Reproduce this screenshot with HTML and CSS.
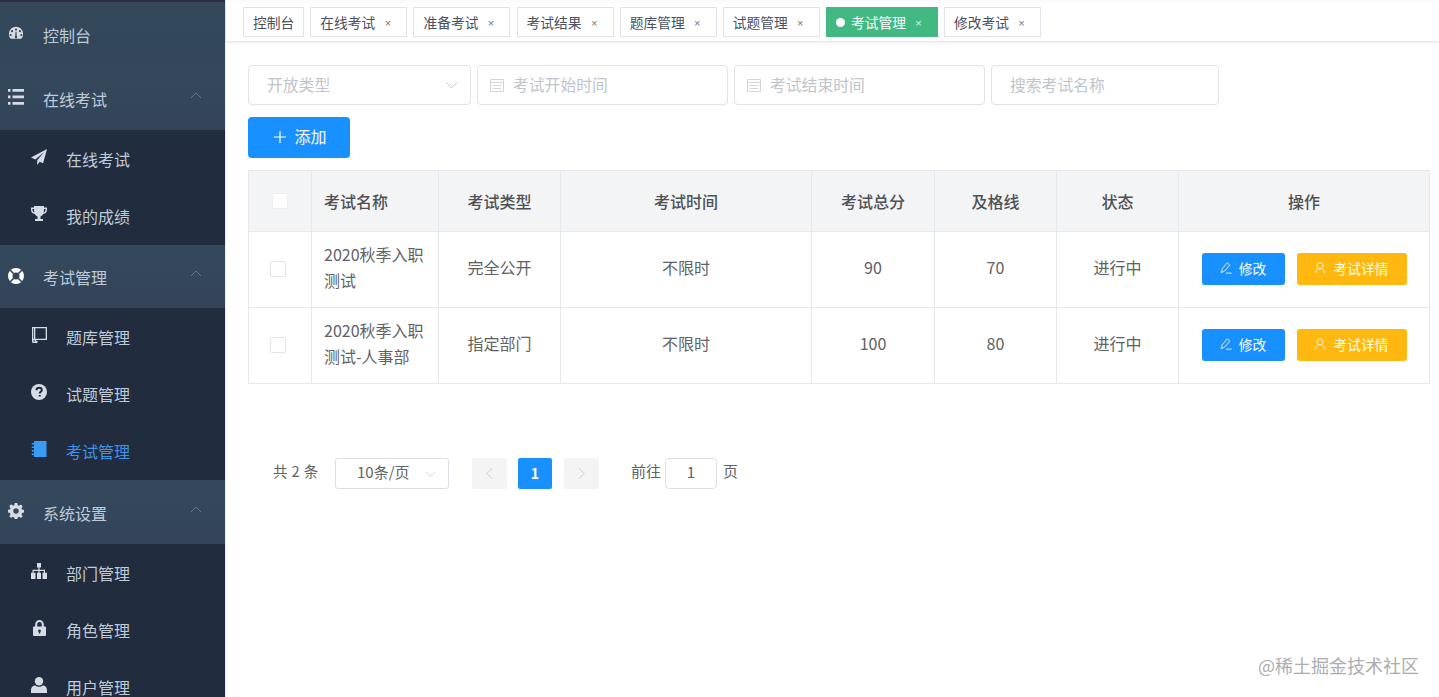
FILE: index.html
```html
<!DOCTYPE html>
<html lang="zh-CN">
<head>
<meta charset="utf-8">
<title>考试管理</title>
<link rel="stylesheet" href="styles.css">
</head>
<body>
<div class="app">
  <aside class="sidebar">
    <div class="topline"></div>
    <div class="head first">
      <svg class="ico" viewBox="0 0 18 16"><path fill-rule="evenodd" d="M9 1a8 8 0 0 0-8 8c0 2 .6 3.600 1.600 5 .2.300.5.500.9.500h11c.4 0 .7-.2.9-.5 1-1.400 1.600-3 1.600-5a8 8 0 0 0-8-8zM9 3a1.200 1.200 0 1 1 0 2.400A1.200 1.200 0 0 1 9 3zM4.600 4.700a1.200 1.200 0 1 1 0 2.400 1.200 1.200 0 0 1 0-2.400zm8.800 0a1.200 1.200 0 1 1 0 2.400 1.200 1.200 0 0 1 0-2.400zM3 9a1.200 1.200 0 1 1 0 2.400A1.200 1.200 0 0 1 3 9zm12 0a1.200 1.200 0 1 1 0 2.400A1.200 1.200 0 0 1 15 9zM8.400 6.500h1.200l.2 4.800a1.400 1.400 0 1 1-1.600 0z"/></svg>
      <span>控制台</span>
    </div>
    <div class="head">
      <svg class="ico" viewBox="0 0 16 16"><path d="M0 0h2.500v2.800H0zM4.500 0H16v2.800H4.500zM0 6.500h2.500v2.800H0zM4.500 6.500H16v2.800H4.500zM0 13h2.500v2.800H0zM4.500 13H16v2.800H4.500z"/></svg>
      <span>在线考试</span>
      <svg class="chev" viewBox="0 0 12 7"><path d="M1 6l5-5 5 5"/></svg>
    </div>
    <div class="sub">
      <svg class="ico" viewBox="0 0 16 16"><path d="M16 0 0 8.600l4.300 1.800L13 3.200 6.200 11.200V16l2.500-3.300 3.400 1.500z"/></svg>
      <span>在线考试</span>
    </div>
    <div class="sub tall">
      <svg class="ico" viewBox="0 0 16 16"><path d="M3 0h10v1.500h3v2.300c0 2.400-1.700 4-3.700 4.300-.7 1.300-1.600 2-2.800 2.400v2.500h2.500V15h-8v-2h2.500v-2.500C5.300 10.100 4.400 9.400 3.700 8.100 1.700 7.800 0 6.200 0 3.800V1.500h3zM1.500 3v.8c0 1.300.8 2.300 1.900 2.700A14 14 0 0 1 3 3zm13 0H13a14 14 0 0 1-.4 3.500c1.100-.4 1.900-1.400 1.900-2.700z"/></svg>
      <span>我的成绩</span>
    </div>
    <div class="head short">
      <svg class="ico" viewBox="0 0 16 16"><path fill="#fff" fill-rule="evenodd" d="M8 0a8 8 0 1 0 0 16A8 8 0 0 0 8 0zm0 4.500a3.500 3.500 0 1 1 0 7 3.500 3.500 0 0 1 0-7z"/><path class="notch" d="M2.300 2.300l3.300 3.300M13.700 2.300l-3.300 3.300M2.300 13.700l3.300-3.300M13.700 13.700l-3.300-3.300"/></svg>
      <span>考试管理</span>
      <svg class="chev" viewBox="0 0 12 7"><path d="M1 6l5-5 5 5"/></svg>
    </div>
    <div class="sub">
      <svg class="ico" viewBox="0 0 16 16"><path fill-rule="evenodd" d="M1 0h15v13H5v.8h1.500V16H2.500A1.500 1.500 0 0 1 1 14.500zm1.300 1.300v10.400h.7V1.300zm2 0v10.400h10.400V1.300zM2.500 13.300v1.400h1.200v-1.400z"/></svg>
      <span>题库管理</span>
    </div>
    <div class="sub">
      <svg class="ico" viewBox="0 0 16 16"><circle cx="8" cy="8" r="8"/><path class="cut" d="M5.400 6.200C5.500 4.600 6.700 3.700 8.200 3.700c1.500 0 2.600.9 2.600 2.200 0 1.900-2.100 1.900-2.100 3.600M8.700 11v1.500"/></svg>
      <span>试题管理</span>
    </div>
    <div class="sub active tall">
      <svg class="ico" viewBox="0 0 16 16"><path d="M3 0h12.500v16H3zM.8 2H3v1.500H.8zM.8 5.500H3V7H.8zM.8 9H3v1.500H.8zM.8 12.500H3V14H.8z"/></svg>
      <span>考试管理</span>
    </div>
    <div class="head">
      <svg class="ico" viewBox="0 0 16 16"><path fill-rule="evenodd" d="M6.700 0h2.600l.4 2.200 1.300.6 1.900-1.300 1.800 1.900-1.200 1.800.5 1.400 2 .4v2.600l-2 .4-.5 1.400 1.200 1.800-1.800 1.900-1.900-1.300-1.300.6-.4 2.100H6.700l-.4-2.100-1.300-.6-1.900 1.300-1.800-1.900 1.200-1.800-.5-1.400-2-.4V6.800l2-.4.5-1.400-1.200-1.800 1.800-1.900L5 2.800l1.300-.6zM8 5.300a2.700 2.700 0 1 0 0 5.400 2.700 2.700 0 0 0 0-5.400z"/></svg>
      <span>系统设置</span>
      <svg class="chev" viewBox="0 0 12 7"><path d="M1 6l5-5 5 5"/></svg>
    </div>
    <div class="sub">
      <svg class="ico" viewBox="0 0 16 16"><path d="M6 0h4v4.500H8.600v2.300h5.400v3h2V16h-4.500V9.800h1.300V8H8.600v1.800H10V16H6V9.800h1.400V8H2.700v1.800h1.800V16H0V9.800h1.500v-3h5.900V4.500H6z"/></svg>
      <span>部门管理</span>
    </div>
    <div class="sub">
      <svg class="ico small" viewBox="0 0 13 16"><path fill-rule="evenodd" d="M6.500 0A4.300 4.300 0 0 0 2.200 4.300V6.500H1a1 1 0 0 0-1 1V15a1 1 0 0 0 1 1h11a1 1 0 0 0 1-1V7.500a1 1 0 0 0-1-1h-1.200V4.300A4.300 4.300 0 0 0 6.500 0zm0 2a2.300 2.300 0 0 1 2.300 2.300v2.200H4.200V4.300A2.300 2.300 0 0 1 6.500 2zm0 7.500a1.400 1.400 0 0 1 .7 2.600v1.400H5.800v-1.400a1.400 1.400 0 0 1 .7-2.600z"/></svg>
      <span>角色管理</span>
    </div>
    <div class="sub">
      <svg class="ico" viewBox="0 0 16 16"><circle cx="8" cy="4.200" r="4.200"/><path d="M0 16v-3c0-2.500 1.700-4.500 4.200-4.500 1 .8 2.400 1.300 3.800 1.300s2.800-.5 3.800-1.300c2.500 0 4.200 2 4.200 4.500v3z"/></svg>
      <span>用户管理</span>
    </div>
  </aside>

  <main class="main">
    <nav class="tags">
      <a class="tag">控制台</a>
      <a class="tag">在线考试<i>×</i></a>
      <a class="tag">准备考试<i>×</i></a>
      <a class="tag">考试结果<i>×</i></a>
      <a class="tag">题库管理<i>×</i></a>
      <a class="tag">试题管理<i>×</i></a>
      <a class="tag on"><b></b>考试管理<i>×</i></a>
      <a class="tag">修改考试<i>×</i></a>
    </nav>

    <section class="content">
      <div class="filters">
        <div class="field w-select">
          <span>开放类型</span>
          <svg class="down" viewBox="0 0 14 8"><path d="M1 1l6 6 6-6"/></svg>
        </div>
        <div class="field w-date">
          <svg class="cal" viewBox="0 0 14 14"><path d="M.5 1.500h13v12H.5zM.5 4.500h13M3 7.500h8M3 10.500h8"/></svg>
          <span>考试开始时间</span>
        </div>
        <div class="field w-date">
          <svg class="cal" viewBox="0 0 14 14"><path d="M.5 1.500h13v12H.5zM.5 4.500h13M3 7.500h8M3 10.500h8"/></svg>
          <span>考试结束时间</span>
        </div>
        <div class="field w-search"><span>搜索考试名称</span></div>
      </div>

      <button class="add"><svg viewBox="0 0 12 12"><path d="M6 0v12M0 6h12"/></svg><span>添加</span></button>

      <table class="grid">
        <colgroup>
          <col class="c1"><col class="c2"><col class="c3"><col class="c4"><col class="c5"><col class="c6"><col class="c7"><col>
        </colgroup>
        <thead>
          <tr>
            <th><span class="check white"></span></th>
            <th class="left">考试名称</th>
            <th>考试类型</th>
            <th>考试时间</th>
            <th>考试总分</th>
            <th>及格线</th>
            <th>状态</th>
            <th>操作</th>
          </tr>
        </thead>
        <tbody>
          <tr>
            <td><span class="check"></span></td>
            <td class="left">2020秋季入职测试</td>
            <td>完全公开</td>
            <td>不限时</td>
            <td>90</td>
            <td>70</td>
            <td>进行中</td>
            <td class="opcell">
              <div class="ops">
                <button class="btn blue"><svg viewBox="0 0 14 14"><path d="M1.500 12.500 2.500 8 8.500 1l3 2.500-6 7zM7 13h6.500"/></svg><span>修改</span></button>
                <button class="btn amber"><svg viewBox="0 0 14 14"><circle cx="7" cy="4.500" r="3.500"/><path d="M1.500 13c.3-3 2-4.500 3.500-5M12.500 13c-.3-3-2-4.500-3.500-5"/></svg><span>考试详情</span></button>
              </div>
            </td>
          </tr>
          <tr>
            <td><span class="check"></span></td>
            <td class="left">2020秋季入职测试-人事部</td>
            <td>指定部门</td>
            <td>不限时</td>
            <td>100</td>
            <td>80</td>
            <td>进行中</td>
            <td class="opcell">
              <div class="ops">
                <button class="btn blue"><svg viewBox="0 0 14 14"><path d="M1.500 12.500 2.500 8 8.500 1l3 2.500-6 7zM7 13h6.500"/></svg><span>修改</span></button>
                <button class="btn amber"><svg viewBox="0 0 14 14"><circle cx="7" cy="4.500" r="3.500"/><path d="M1.500 13c.3-3 2-4.500 3.500-5M12.500 13c-.3-3-2-4.500-3.500-5"/></svg><span>考试详情</span></button>
              </div>
            </td>
          </tr>
        </tbody>
      </table>

      <div class="pager">
        <span class="total">共 2 条</span>
        <div class="size"><span>10条/页</span><svg viewBox="0 0 14 8"><path d="M1 1l6 6 6-6"/></svg></div>
        <span class="pg"><svg viewBox="0 0 8 14"><path d="M7 1 1 7l6 6"/></svg></span>
        <span class="pg cur">1</span>
        <span class="pg"><svg viewBox="0 0 8 14"><path d="M1 1l6 6-6 6"/></svg></span>
        <span class="goto">前往</span>
        <span class="jump">1</span>
        <span class="unit">页</span>
      </div>
    </section>
  </main>
</div>
<div class="mark">@稀土掘金技术社区</div>
</body>
</html>
```
FILE: styles.css
```css
* { box-sizing: border-box; }
html, body { margin: 0; height: 100%; overflow: hidden; }
body {
  font-family: "Noto Sans CJK SC", "Liberation Sans", sans-serif;
  color: #606266;
  background: #fff;
}
.app { display: flex; height: 697px; }

/* sidebar */
.sidebar {
  flex: 0 0 226px;
  height: 697px;
  overflow: hidden;
  background: #212c3e;
  border-right: 1px solid #e4edf4;
  color: #bfcbd9;
}
.topline { height: 2px; background: #2d2c40; }
.head {
  height: 64px;
  display: flex;
  align-items: center;
  padding: 1px 0 0 8px;
  font-size: 16px;
  color: #bfcbd9;
  background: linear-gradient(#34485b, #33445a);
}
.head.first { background: linear-gradient(#33495b, #34465a); }
.head.short { height: 63px; }
.head .ico { width: 16px; height: 16px; margin: -3px 19px 0 0; flex: none; }
.head .chev { width: 12px; height: 7px; margin: -7px 23px 0 auto; fill: none; stroke: #66778a; stroke-width: 1; }
.sub {
  height: 57px;
  display: flex;
  align-items: center;
  padding: 0 0 0 31px;
  font-size: 16px;
  color: #bfcbd9;
  background: #212c3e;
}
.sub.tall { height: 58px; }
.sub .ico { width: 16px; height: 16px; margin: -4px 19px 0 0; flex: none; }
.sub .ico.small { width: 13px; margin-left: 2px; margin-right: 20px; }
.ico { fill: #d5dce5; }
.ico .cut { fill: none; stroke: #212c3e; stroke-width: 2; }
.ico .notch { fill: none; stroke: #34465a; stroke-width: 1.500; }
.sub.active { color: #3f93e8; }
.sub.active .ico { fill: #3a9bf7; }

/* main */
.main { flex: 1; min-width: 0; }
.tags {
  height: 41px;
  padding: 4px 0 0 17px;
  display: flex;
  gap: 6.100px;
  background: #fff;
  box-shadow: 0 1px 3px rgba(0, 0, 0, .14);
  border-top: 3px solid #fbfbfb;
}
.tag {
  height: 30px;
  padding: 0 9px;
  border: 1px solid #dfe3ea;
  font-size: 13.750px;
  line-height: 28px;
  color: #495060;
  display: flex;
  align-items: center;
  background: #fff;
}
.tag i {
  width: 7px;
  margin: 2px 6px 0 9px;
  font-family: "Liberation Sans", sans-serif;
  font-style: normal;
  font-size: 11px;
  color: #777;
  text-align: center;
}
.tag.on { background: #42b983; border-color: #42b983; color: #fff; }
.tag.on i { color: #dff3ea; }
.tag.on b { width: 9px; height: 9px; border-radius: 50%; background: #fff; margin-right: 6px; }

.content { padding: 24px 8px 0 22px; }
.filters { display: flex; gap: 6px; }
.field {
  height: 40px;
  border: 1px solid #e0e3e8;
  border-radius: 4px;
  display: flex;
  align-items: center;
  font-size: 16px;
  color: #c0c4cc;
  background: #fff;
}
.field span { font-size: 15.800px; margin-top: -2px; }
.w-select { width: 223px; padding: 0 12px 0 18px; justify-content: space-between; }
.w-date { width: 251px; padding-left: 12px; }
.w-search { width: 228px; padding-left: 18px; }
.down { width: 13px; height: 8px; fill: none; stroke: #c0c4cc; stroke-width: 1; }
.cal { width: 14px; height: 14px; margin-right: 9px; fill: none; stroke: #d2d5da; stroke-width: 1; }

.add {
  display: flex;
  align-items: center;
  justify-content: center;
  gap: 8px;
  width: 102px;
  height: 41px;
  margin-top: 12px;
  padding: 0 0 0 3px;
  border: 0;
  border-radius: 4px;
  background: #1890ff;
  color: #fff;
  font: inherit;
  font-size: 16px;
}
.add span { margin-top: -3px; }
.add svg { width: 12px; height: 12px; fill: none; stroke: #fff; stroke-width: 1.200; margin-top: -2px; }

/* table */
.grid {
  width: 1182px;
  margin-top: 12px;
  border-collapse: collapse;
  table-layout: fixed;
  font-size: 16px;
}
.c1 { width: 63px; }
.c2 { width: 127px; }
.c3 { width: 122px; }
.c4 { width: 251px; }
.c5 { width: 123px; }
.c6 { width: 122px; }
.c7 { width: 122px; }
.grid th, .grid td {
  border: 1px solid #e6e8ec;
  text-align: center;
  padding: 0 12px;
  line-height: 26px;
}
.grid th {
  height: 61px;
  background: #f3f4f5;
  font-weight: 500;
  color: #4f5155;
}
.grid td { height: 76px; padding-bottom: 5px; color: #606266; }
.grid .left { text-align: left; }
.grid td.opcell { padding-bottom: 1px; }
.check {
  display: block;
  width: 16px;
  height: 16px;
  margin: 0 auto;
  border: 1px solid #e2e4e8;
  border-radius: 2px;
  background: #fff;
}
.check.white { border-color: #eceef0; }
.grid td:first-child .check { margin: 3px 0 0 9px; }
.ops { display: flex; justify-content: center; gap: 12px; }
.btn {
  display: flex;
  align-items: center;
  justify-content: center;
  height: 32px;
  padding: 0;
  border: 0;
  border-radius: 3px;
  color: #fff;
  font: inherit;
  font-size: 13.750px;
}
.btn span { margin-top: -3px; }
.btn svg { width: 12px; height: 12px; margin: -2px 7px 0 0; fill: none; stroke: #fff; stroke-width: 1; }
.blue { width: 83px; background: #1890ff; }
.amber { width: 110px; background: #ffb80f; }

/* pager */
.pager {
  display: flex;
  align-items: center;
  height: 31px;
  margin: 74px 0 0 25px;
  font-size: 15px;
  color: #606266;
}
.pager span, .size span { line-height: 28px; }
.total { width: 62px; padding-bottom: 5px; font-size: 14.500px; letter-spacing: .4px; }
.size {
  width: 114px;
  height: 31px;
  padding: 0 12px 0 21px;
  border: 1px solid #dcdfe6;
  border-radius: 3px;
  display: flex;
  align-items: center;
  justify-content: space-between;
}
.size span { margin-top: -3px; }
.size svg { width: 11px; height: 6px; fill: none; stroke: #c0c4cc; }
.pg {
  width: 35px;
  height: 31px;
  margin-right: 11px;
  background: #f4f4f5;
  border-radius: 2px;
  display: flex;
  align-items: center;
  justify-content: center;
}
.size + .pg { margin-left: 23px; }
.pg svg { width: 7px; height: 13px; fill: none; stroke: #c0c4cc; stroke-width: 1; }
.pg.cur { background: #1890ff; color: #fff; font-weight: 700; font-size: 14px; width: 34px; margin-right: 12px; padding-bottom: 1px; }
.goto { margin-left: 21px; width: 34px; padding-bottom: 5px; }
.jump {
  width: 52px;
  height: 31px;
  padding-bottom: 3px;
  border: 1px solid #dcdfe6;
  border-radius: 4px;
  display: flex;
  align-items: center;
  justify-content: center;
}
.unit { margin-left: 6px; padding-bottom: 5px; }

.mark {
  position: absolute;
  right: 20px;
  top: 652px;
  font-size: 18px;
  color: #adadad;
  white-space: nowrap;
}
```
